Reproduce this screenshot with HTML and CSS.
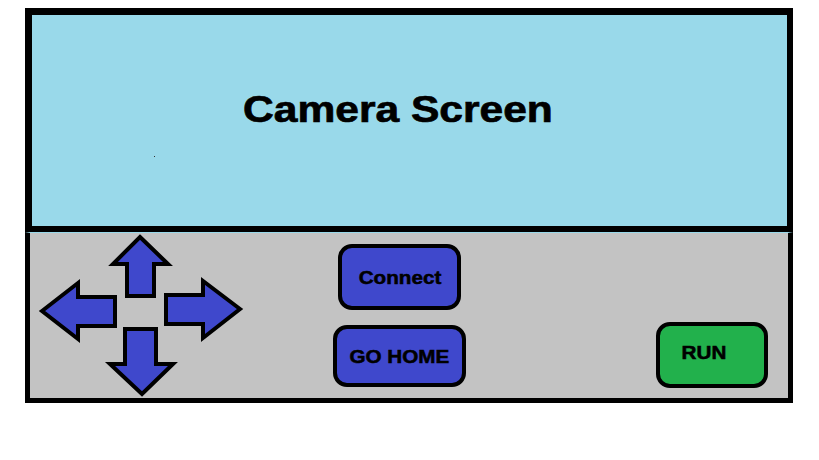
FILE: index.html
```html
<!DOCTYPE html>
<html>
<head>
<meta charset="utf-8">
<link rel="stylesheet" href="styles.css">
</head>
<body>
<div class="frame">
  <div class="camera">
    <span class="title">Camera Screen</span>
    <span class="speck"></span>
  </div>
  <div class="controls">
    <svg class="dpad" width="215" height="165" viewBox="0 0 215 165">
      <g fill="#3f48cc" stroke="#000" stroke-width="4" stroke-linejoin="miter">
        <polygon points="110,4 138,31 124,31 124,63 97,63 97,31 83,31"/>
        <polygon points="12,78 48,50 48,64 85,64 85,93 48,93 48,106"/>
        <polygon points="210,76 173,48 173,62 136,62 136,91 173,91 173,105"/>
        <polygon points="95,96 126,96 126,131 143,131 112,161 80,131 95,131"/>
      </g>
    </svg>
    <div class="stack">
      <div class="btn blue connect"><span class="label">Connect</span></div>
      <div class="btn blue home"><span class="label">GO HOME</span></div>
    </div>
    <div class="btn green run"><span class="label">RUN</span></div>
  </div>
</div>
</body>
</html>
```

FILE: styles.css
```css
html, body {
  margin: 0;
  padding: 0;
  background: #ffffff;
}
body {
  font-family: "Liberation Sans", Arial, sans-serif;
}
.frame {
  margin: 8px 0 0 25px;
  width: 768px;
}
.camera {
  position: relative;
  box-sizing: border-box;
  height: 224px;
  background: #99d9ea;
  border-style: solid;
  border-color: #000;
  border-width: 7px 6px 6px 7px;
  padding: 76px 0 0 211px;
}
.title {
  display: inline-block;
  font-weight: bold;
  font-size: 37px;
  line-height: 1;
  color: #000;
  -webkit-text-stroke: 0.7px #000;
  transform: scaleX(1.15);
  transform-origin: left center;
  white-space: nowrap;
}
.speck {
  position: absolute;
  left: 122px;
  top: 141px;
  width: 1px;
  height: 1px;
  background: #333;
}
.controls {
  box-sizing: border-box;
  height: 171px;
  background: #c3c3c3;
  border-style: solid;
  border-color: #000;
  border-width: 0 5px 5px 5px;
  border-top: 1px solid #99d9ea;
  display: flex;
  align-items: flex-start;
}
.dpad {
  display: block;
  flex: none;
  overflow: visible;
}
.stack {
  flex: none;
  width: 133px;
  margin-left: 88px;
  padding-top: 11px;
  display: flex;
  flex-direction: column;
  align-items: center;
  gap: 15px;
}
.btn {
  box-sizing: border-box;
  border: 4px solid #000;
  border-radius: 14px;
  display: flex;
  align-items: center;
  justify-content: center;
  flex: none;
  padding-top: 4px;
}
.blue { background: #3f48cc; }
.green { background: #22b14c; }
.connect { width: 123px; height: 66px; }
.home { width: 133px; height: 62px; padding-top: 3px; }
.run {
  width: 112px;
  height: 66px;
  margin-left: 190px;
  margin-top: 89px;
  padding: 0 17px 2px 0;
}
.label {
  display: inline-block;
  font-weight: bold;
  font-size: 17.5px;
  line-height: 1;
  color: #000;
  -webkit-text-stroke: 0.5px #000;
  transform: scaleX(1.18);
  white-space: nowrap;
}
```
